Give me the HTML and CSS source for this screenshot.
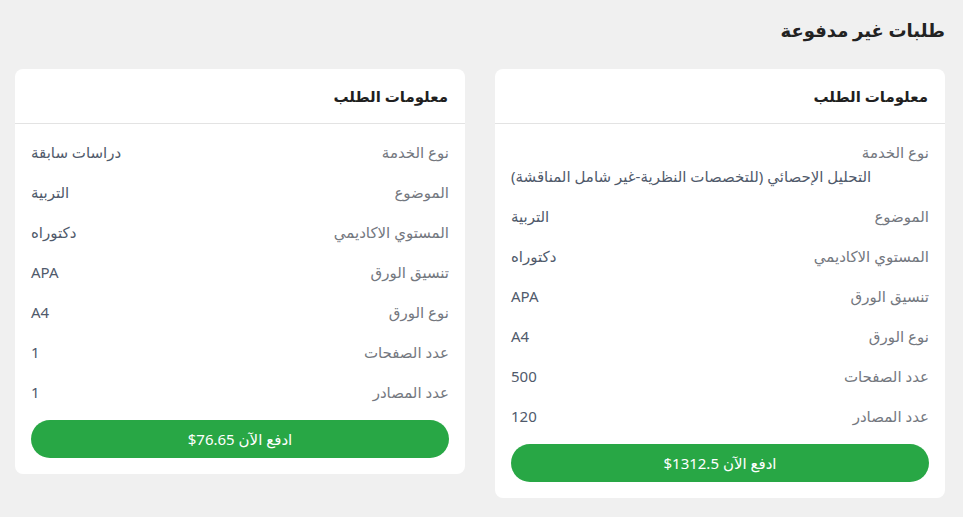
FILE: index.html
```html
<!DOCTYPE html>
<html lang="ar" dir="rtl">
<head>
<meta charset="utf-8">
<title>طلبات غير مدفوعة</title>
<link rel="stylesheet" href="styles.css">
</head>
<body>
<main class="page">
  <h1 class="page-title">طلبات غير مدفوعة</h1>
  <div class="cards">
    <section class="card">
      <header class="card-head">معلومات الطلب</header>
      <div class="card-body">
        <div class="row"><span class="label">نوع الخدمة</span><span class="value">التحليل الإحصائي (للتخصصات النظرية-غير شامل المناقشة)</span></div>
        <div class="row"><span class="label">الموضوع</span><span class="value">التربية</span></div>
        <div class="row"><span class="label">المستوي الاكاديمي</span><span class="value">دكتوراه</span></div>
        <div class="row"><span class="label">تنسيق الورق</span><span class="value">APA</span></div>
        <div class="row"><span class="label">نوع الورق</span><span class="value">A4</span></div>
        <div class="row"><span class="label">عدد الصفحات</span><span class="value">500</span></div>
        <div class="row"><span class="label">عدد المصادر</span><span class="value">120</span></div>
        <button class="pay">ادفع الآن <bdi>$1312.5</bdi></button>
      </div>
    </section>
    <section class="card">
      <header class="card-head">معلومات الطلب</header>
      <div class="card-body">
        <div class="row"><span class="label">نوع الخدمة</span><span class="value">دراسات سابقة</span></div>
        <div class="row"><span class="label">الموضوع</span><span class="value">التربية</span></div>
        <div class="row"><span class="label">المستوي الاكاديمي</span><span class="value">دكتوراه</span></div>
        <div class="row"><span class="label">تنسيق الورق</span><span class="value">APA</span></div>
        <div class="row"><span class="label">نوع الورق</span><span class="value">A4</span></div>
        <div class="row"><span class="label">عدد الصفحات</span><span class="value">1</span></div>
        <div class="row"><span class="label">عدد المصادر</span><span class="value">1</span></div>
        <button class="pay">ادفع الآن <bdi>$76.65</bdi></button>
      </div>
    </section>
  </div>
</main>
</body>
</html>
```
FILE: styles.css
```css
* { box-sizing: border-box; }
html, body { margin: 0; padding: 0; }
body {
  background: #f0f0f0;
  font-family: "Noto Sans", "DejaVu Sans", sans-serif;
  color: #333;
}
.page {
  padding: 16px 18px 20px 15px;
}
.page-title {
  margin: 0 0 25px;
  font-size: 18px;
  font-weight: 700;
  line-height: 28px;
  color: #222;
}
.cards {
  display: flex;
  gap: 30px;
  align-items: flex-start;
}
.card {
  width: 450px;
  background: #fff;
  border-radius: 8px;
}
.card-head {
  height: 55px;
  padding: 0 17px;
  display: flex;
  align-items: center;
  border-bottom: 1px solid #e3e3e3;
  font-size: 15px;
  font-weight: 700;
  color: #1f1f1f;
}
.card-body {
  padding: 8px 16px 16px;
  display: flex;
  flex-direction: column;
}
.row {
  display: flex;
  flex-wrap: wrap;
  justify-content: space-between;
  row-gap: 4px;
  padding: 10px 0;
  font-size: 15px;
  font-weight: 400;
  line-height: 20px;
}
.label { color: #74787f; }
.value {
  color: #505a6b;
  margin-inline-start: auto;
}
.pay {
  margin-top: 8px;
  height: 38px;
  border: 0;
  border-radius: 19px;
  background: #28a745;
  color: #fff;
  font-family: inherit;
  font-size: 15px;
  font-weight: 400;
  cursor: pointer;
}
```
